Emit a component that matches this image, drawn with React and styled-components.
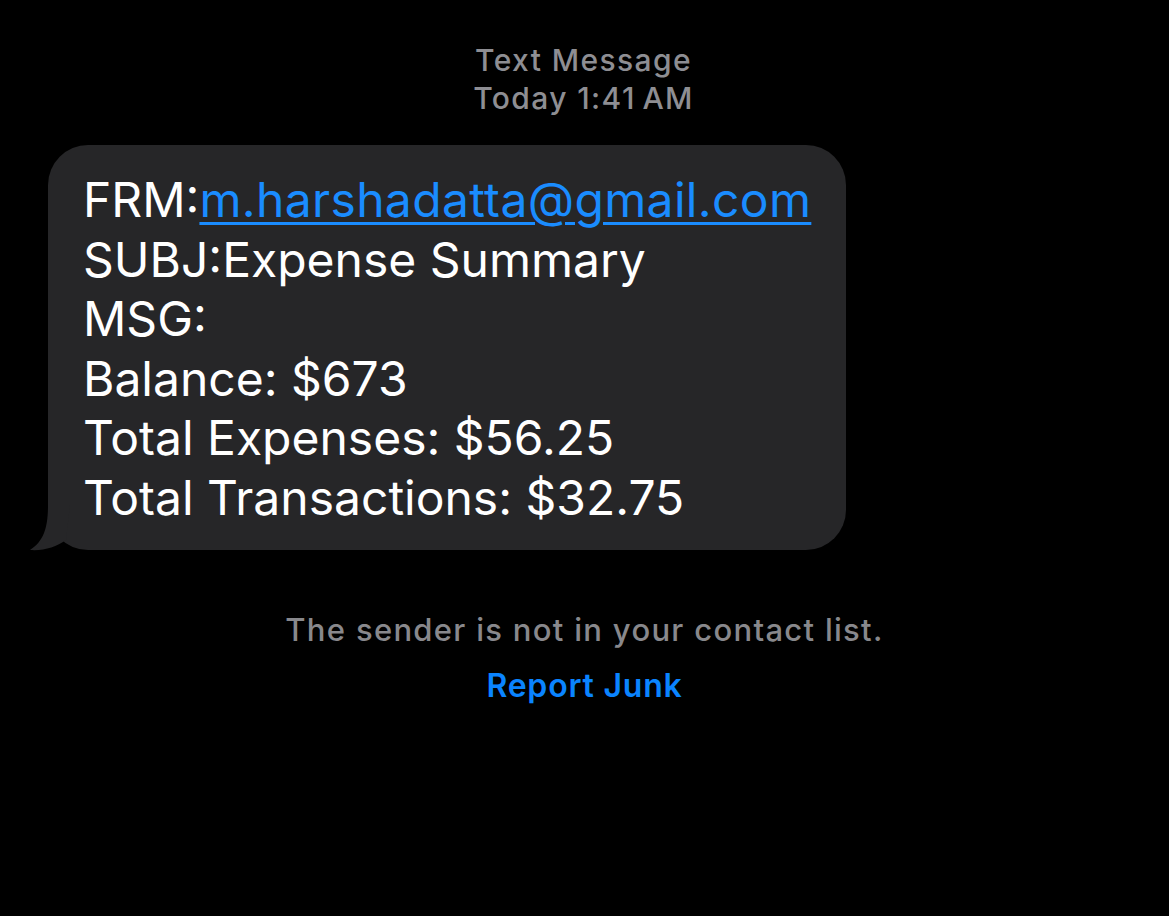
import React from "react";
import styled, { createGlobalStyle } from "styled-components";

const GlobalStyle = createGlobalStyle`
  html, body {
    margin: 0;
    padding: 0;
    background: #000;
  }
  body {
    font-family: Inter, "Noto Sans", "Liberation Sans", sans-serif;
    -webkit-font-smoothing: antialiased;
  }
`;

const message = {
  from: "m.harshadatta@gmail.com",
  subject: "Expense Summary",
  lines: [
    "Balance: $673",
    "Total Expenses: $56.25",
    "Total Transactions: $32.75",
  ],
};

export default function App() {
  return (
    <>
      <GlobalStyle />
      <Screen>
        <Header>
          <HeaderLine>Text Message</HeaderLine>
          <HeaderLine>Today 1:41{"\u2009"}AM</HeaderLine>
        </Header>

        <BubbleRow>
          <Bubble>
            <Tail width="40" height="46" viewBox="0 0 40 46">
              <path
                d="M18 0 C18 22 14 36 0 45 C14 46 26 42 36 35 L40 0 Z"
                fill="#262628"
              />
            </Tail>
            <BubbleText>
              FRM:<MailLink href="#">{message.from}</MailLink>
            </BubbleText>
            <BubbleText>SUBJ:{message.subject}</BubbleText>
            <BubbleText>MSG:</BubbleText>
            {message.lines.map((line) => (
              <BubbleText key={line}>{line}</BubbleText>
            ))}
          </Bubble>
        </BubbleRow>

        <Notice>
          <NoticeText>The sender is not in your contact list.</NoticeText>
          <JunkButton>Report Junk</JunkButton>
        </Notice>
      </Screen>
    </>
  );
}

const Screen = styled.div`
  width: 1169px;
  height: 916px;
  background: #000;
  display: flex;
  flex-direction: column;
  box-sizing: border-box;
  padding-top: 41px;
`;

const Header = styled.div`
  display: flex;
  flex-direction: column;
  align-items: center;
  padding-right: 2px;
`;

const HeaderLine = styled.div`
  color: #8e8e93;
  font-size: 30px;
  line-height: 38px;
  font-weight: 500;
  letter-spacing: 1.4px;
`;

const BubbleRow = styled.div`
  display: flex;
  padding: 28px 0 0 48px;
`;

const Bubble = styled.div`
  position: relative;
  width: 798px;
  box-sizing: border-box;
  background: #262628;
  border-radius: 40px;
  padding: 25px 20px 23px 35px;
`;

const Tail = styled.svg`
  position: absolute;
  left: -18px;
  bottom: -1px;
`;

const BubbleText = styled.div`
  position: relative;
  color: #fff;
  font-size: 48px;
  line-height: 59.5px;
  font-weight: 400;
  letter-spacing: 0px;
  white-space: nowrap;
`;

const MailLink = styled.a`
  color: #1a8cff;
  letter-spacing: 0.35px;
  text-decoration: underline;
  text-decoration-thickness: 3px;
  text-underline-offset: 5px;
`;

const Notice = styled.div`
  display: flex;
  flex-direction: column;
  align-items: center;
  padding: 60px 0 0 0;
  gap: 16px;
`;

const NoticeText = styled.div`
  color: #88888c;
  font-size: 31px;
  line-height: 40px;
  font-weight: 500;
  letter-spacing: 1.3px;
`;

const JunkButton = styled.button`
  background: none;
  border: none;
  padding: 0;
  font-family: inherit;
  color: #0a84ff;
  font-size: 32px;
  line-height: 40px;
  font-weight: 600;
  letter-spacing: 0.8px;
  cursor: pointer;
`;
